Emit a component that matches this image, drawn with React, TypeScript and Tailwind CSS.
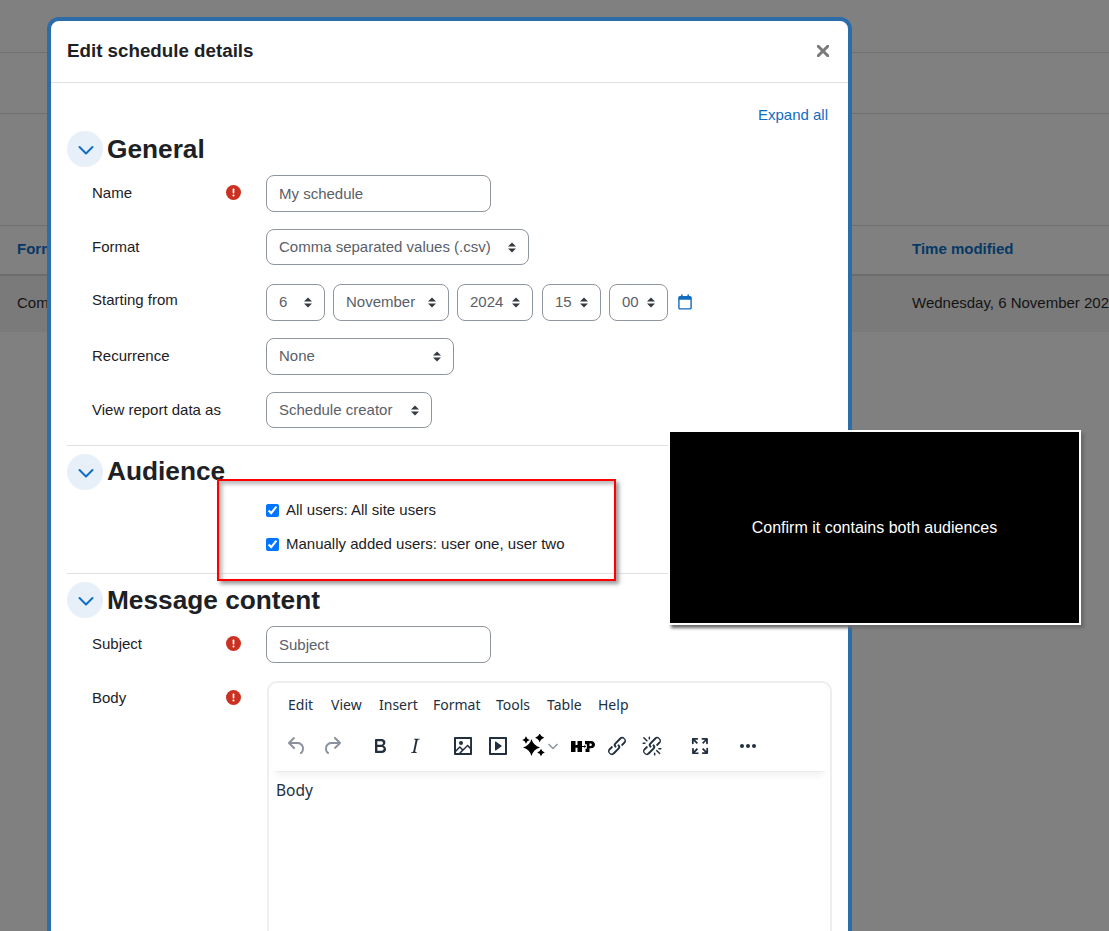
import React from "react";

const SANS = "font-['Liberation_Sans',Arial,sans-serif]";

function Arrows() {
  return (
    <svg width="10" height="11" viewBox="0 0 10 11" className="shrink-0" aria-hidden="true">
      <path d="M1 4.4 5 .6l4 3.8Z M1 6.6l4 3.8 4-3.8Z" fill="#343a40" />
    </svg>
  );
}

function Select({ w, h = "h-[37px]", label }: { w: string; h?: string; label: string }) {
  return (
    <div className={`${w} ${h} pr-[11px] flex items-center justify-between rounded-lg border border-[#8f959e] bg-white pl-[12px] text-[15px] text-[#5a6068]`}>
      <span>{label}</span>
      <Arrows />
    </div>
  );
}

function ErrorIcon() {
  return (
    <svg width="15" height="15" viewBox="0 0 16 16" className="mt-[3px] shrink-0" aria-hidden="true">
      <circle cx="8" cy="8" r="8" fill="#ca3120" />
      <rect x="7.1" y="3.7" width="1.8" height="5.3" rx=".7" fill="#fff" />
      <circle cx="8" cy="11.1" r="1.1" fill="#fff" />
    </svg>
  );
}

function Label({ text, pt = "pt-[7px]", error }: { text: string; pt?: string; error?: boolean }) {
  return (
    <div className={`w-[199px] shrink-0 flex items-start justify-between pl-[25px] pr-[25px] ${pt} text-[15px] leading-[22.5px]`}>
      <span>{text}</span>
      {error && <ErrorIcon />}
    </div>
  );
}

function Section({ title, up }: { title: string; up?: boolean }) {
  return (
    <div className="flex items-center h-[36px] mb-[8px]">
      <div className="w-[36px] h-[36px] rounded-full bg-[#e7eff8] flex items-center justify-center mr-[4px]">
        <svg width="16" height="16" viewBox="0 0 16 16" fill="none" aria-hidden="true" className="mt-[2px] ml-[2px]">
          <path d="M1.500 5l6.500 6.500L14.500 5" stroke="#0f6cbf" strokeWidth="2" strokeLinecap="round" strokeLinejoin="round" />
        </svg>
      </div>
      <h3 className={`text-[26.25px] font-bold leading-[36px] text-[#1d2125] ${up ? "pb-[2px]" : ""}`}>{title}</h3>
    </div>
  );
}

function TIcon({ d, color = "#222f3e", className = "w-[35px]" }: { d: string; color?: string; className?: string }) {
  return (
    <div className={`${className} h-[34px] flex items-center justify-center shrink-0`}>
      <svg width="24" height="24" viewBox="0 0 24 24" fill={color} fillRule="evenodd" aria-hidden="true">
        <path d={d} />
      </svg>
    </div>
  );
}

const ICONS = {
  undo: "M6.4 8H12c3.7 0 6.2 2 6.8 5.1.6 2.7-.4 5.6-2.3 6.8a1 1 0 0 1-1-1.8c1.1-.6 1.8-2.7 1.4-4.6-.5-2.1-2.1-3.5-4.9-3.5H6.4l3.3 3.3a1 1 0 1 1-1.4 1.4l-5-5a1 1 0 0 1 0-1.4l5-5a1 1 0 0 1 1.4 1.4L6.4 8Z",
  redo: "M17.6 10H12c-2.8 0-4.4 1.4-4.9 3.5-.4 2 .3 4 1.4 4.6a1 1 0 1 1-1 1.8c-2-1.2-2.9-4.1-2.3-6.8.6-3 3-5.1 6.8-5.1h5.6l-3.3-3.3a1 1 0 1 1 1.4-1.4l5 5a1 1 0 0 1 0 1.4l-5 5a1 1 0 0 1-1.4-1.4l3.3-3.3Z",
  bold: "M7.8 19c-.3 0-.5 0-.6-.2l-.2-.5V5.7c0-.2 0-.4.2-.5l.6-.2h5c1.5 0 2.7.3 3.5 1 .7.6 1.1 1.4 1.1 2.5a3 3 0 0 1-.6 1.9c-.4.6-1 1-1.6 1.2.4.1.9.3 1.3.6s.8.7 1 1.2c.4.4.5 1 .5 1.6 0 1.3-.4 2.3-1.3 3-.8.7-2.1 1-3.8 1H7.8Zm5-8.3c.6 0 1.2-.1 1.6-.5.4-.3.6-.7.6-1.3 0-1.1-.8-1.7-2.3-1.7H9.3v3.5h3.4Zm.5 6c.7 0 1.3-.1 1.7-.4.4-.4.6-.9.6-1.5s-.2-1-.7-1.4c-.4-.3-1-.4-2-.4H9.4v3.8h4Z",
  italic: "M16.7 4.7l-.1.9h-.3c-.6 0-1 0-1.4.3-.3.3-.4.6-.5 1.1l-2.1 9.8v.6c0 .5.4.8 1.4.8h.2l-.2.8H8l.2-.8h.2c1.1 0 1.8-.5 2-1.5l2-9.8.1-.5c0-.6-.4-.8-1.4-.8h-.3l.2-.9h5.8Z",
  image: "M5 15.7l3.3-3.2c.3-.3.7-.3 1 0L12 15l4.1-4c.3-.4.8-.4 1 0l2 1.9V5H5v10.7ZM5 18V19h3l2.8-2.9-2-2L5 17.9Zm14-3l-2.5-2.4-6.4 6.5H19v-4ZM4 3h16c.6 0 1 .4 1 1v16c0 .6-.4 1-1 1H4a1 1 0 0 1-1-1V4c0-.6.4-1 1-1Zm6 8a2 2 0 1 0 0-4 2 2 0 0 0 0 4Z",
  media: "M4 3h16c.6 0 1 .4 1 1v16c0 .6-.4 1-1 1H4a1 1 0 0 1-1-1V4c0-.6.4-1 1-1Zm1 2v14h14V5H5Zm4.8 2.6l5.6 4a.5.5 0 0 1 0 .8l-5.6 4A.5.5 0 0 1 9 16V8a.5.5 0 0 1 .8-.4Z",
  link: "M6.2 12.3a1 1 0 0 1 1.4 1.4l-2 2a2 2 0 1 0 2.6 2.8l4.8-4.8a1 1 0 0 0 0-1.4 1 1 0 1 1 1.4-1.3 2.9 2.9 0 0 1 0 4L9.6 20a3.9 3.9 0 0 1-5.5-5.5l2-2Zm11.6-.6a1 1 0 0 1-1.4-1.4l2-2a2 2 0 1 0-2.6-2.8L11 10.3a1 1 0 0 0 0 1.4A1 1 0 1 1 9.6 13a2.9 2.9 0 0 1 0-4L14.4 4a3.9 3.9 0 0 1 5.5 5.5l-2 2Z",
  unlink: "M6.2 12.3a1 1 0 0 1 1.4 1.4l-2.1 2a2 2 0 1 0 2.7 2.8l4.8-4.8a1 1 0 0 0 0-1.4 1 1 0 1 1 1.4-1.3 2.9 2.9 0 0 1 0 4L9.6 20a3.9 3.9 0 0 1-5.5-5.5l2-2Zm11.6-.6a1 1 0 0 1-1.4-1.4l2.1-2a2 2 0 1 0-2.7-2.8L11 10.3a1 1 0 0 0 0 1.4A1 1 0 1 1 9.6 13a2.9 2.9 0 0 1 0-4L14.4 4a3.9 3.9 0 0 1 5.5 5.5l-2 2ZM7.6 6.3a.8.8 0 0 1-1 1.1L3.3 4.2a.7.7 0 1 1 1-1l3.2 3.1ZM5.1 8.6a.8.8 0 0 1 0 1.5H3a.8.8 0 0 1 0-1.5H5Zm5-3.5a.8.8 0 0 1-1.5 0V3a.8.8 0 0 1 1.5 0v2Zm6 11.8a.8.8 0 0 1 1-1l3.2 3.2a.8.8 0 0 1-1 1L16 17Zm-2.2 2a.8.8 0 0 1 1.5 0V21a.8.8 0 0 1-1.5 0V19Zm5-3.5a.7.7 0 1 1 0-1.5H21a.8.8 0 0 1 0 1.5h-2Z",
  full: "M15.3 10l-1.2-1.3 2.9-3h-2.3a.9.9 0 1 1 0-1.7H19c.5 0 .9.4.9.9v4.4a.9.9 0 1 1-1.8 0V7l-2.9 3Zm0 4l3 3v-2.3c0-.5.4-.9 1-.9.4 0 .8.4.8.9v4.4c0 .5-.4.9-.9.9h-4.4a.9.9 0 1 1 0-1.8H17l-3-2.9 1.3-1.3ZM10 15.4l-2.9 3h2.3a.9.9 0 1 1 0 1.7H5a.9.9 0 0 1-.9-.9v-4.4a.9.9 0 1 1 1.8 0V17l2.9-3 1.2 1.3ZM8.7 10L5.7 7v2.3c0 .5-.4.9-1 .9a.9.9 0 0 1-.8-.9V4.9c0-.5.4-.9.9-.9h4.4a.9.9 0 1 1 0 1.8H7l3 2.9L8.7 10Z",
  more: "M6 10a2 2 0 0 0-2 2c0 1.1.9 2 2 2a2 2 0 0 0 2-2 2 2 0 0 0-2-2Zm12 0a2 2 0 0 0-2 2c0 1.1.9 2 2 2a2 2 0 0 0 2-2 2 2 0 0 0-2-2Zm-6 0a2 2 0 0 0-2 2c0 1.1.9 2 2 2a2 2 0 0 0 2-2 2 2 0 0 0-2-2Z",
};

function star(cx: number, cy: number, r: number) {
  const k = r * 0.22;
  return `M${cx} ${cy - r}Q${cx + k} ${cy - k} ${cx + r} ${cy}Q${cx + k} ${cy + k} ${cx} ${cy + r}Q${cx - k} ${cy + k} ${cx - r} ${cy}Q${cx - k} ${cy - k} ${cx} ${cy - r}Z`;
}

function Sparkles() {
  return (
    <svg width="24" height="24" viewBox="0 0 24 24" fill="#000" aria-hidden="true">
      <path d={star(10.5, 13.5, 8.5)} />
      <path d={star(18.7, 3.8, 4.6)} />
      <path d={star(20, 18.5, 3.8)} />
      <path d={star(5, 6, 3.8)} />
    </svg>
  );
}

function H5P() {
  return (
    <svg width="24" height="11" viewBox="0 0 24 11" fill="#000" className="ml-[2px]" aria-hidden="true">
      <path d="M0 0h4.500v4h2V0H11v11H6.500V6.700h-2V11H0Z" />
      <path d="M14 0h6c2.400 0 4 1.500 4 3.600S22.400 7.300 20 7.300h-1.500V11H14.500V7.700h1.300V3.300H14Zm4.500 2.400v2.500h1c.8 0 1.300-.5 1.300-1.250S20.300 2.400 19.500 2.400Z" />
      <path d="M11 4.800h2.300V3.500L16 5.500l-2.700 2V6.200H11Z" fill="#fff" />
      <path d="M11 5h2.300V4L15.200 5.500l-1.900 1.500V6H11Z" />
    </svg>
  );
}

const MENU: [string, string][] = [
  ["Edit", "w-[43px]"],
  ["View", "w-[48px]"],
  ["Insert", "w-[54px]"],
  ["Format", "w-[63px]"],
  ["Tools", "w-[51px]"],
  ["Table", "w-[51px]"],
  ["Help", "w-[40px]"],
];

export default function App() {
  return (
    <div className={`relative h-[931px] w-full overflow-hidden bg-[#808080] text-[#1d2125] ${SANS}`}>
      {/* dimmed page behind the dialog */}
      <div className="whitespace-nowrap text-[15px]">
        <div className="h-[53px] border-b border-[#707070]" />
        <div className="h-[61px] border-b border-[#707070]" />
        <div className="h-[112px] border-b border-[#707070]" />
        <div className="h-[50px] border-b-2 border-[#6c6c6c] flex items-center font-bold text-[#063866]">
          <span className="w-[912px] shrink-0 pl-[17px] pb-[2px]">Format</span>
          <span className="pb-[2px]">Time modified</span>
        </div>
        <div className="h-[56px] bg-[#7a7a7a] flex items-center pb-[2px] text-[#141414]">
          <span className="w-[912px] shrink-0 pl-[17px]">Comma separated values (.csv)</span>
          <span>Wednesday, 6 November 2024</span>
        </div>
      </div>

      {/* dialog */}
      <div className="absolute left-[47px] top-[17px] w-[805px] h-[1000px] rounded-[12px] border-4 border-[#2b6ca9] bg-white">
        <div className="h-[62px] border-b border-[#dee2e6] flex items-center justify-between pl-[16px] pr-[19px]">
          <h5 className="text-[18.75px] font-bold text-[#1d2125]">Edit schedule details</h5>
          <svg width="12" height="12" viewBox="0 0 12 12" aria-hidden="true" className="-mt-[2px]">
            <path d="M1.200 1.200l9.600 9.600M10.800 1.200l-9.600 9.600" stroke="#7a7a7a" strokeWidth="3" strokeLinecap="round" />
          </svg>
        </div>

        <div className="pt-[21px] px-[16px]">
          <div className="h-[23px] mb-[4px] pr-[4px] text-right text-[15px] leading-[22.5px] text-[#0f6cbf]">Expand all</div>

          <Section title="General" />
          <div className="flex h-[37px] mb-[17px]">
            <Label text="Name" error />
            <div className="w-[225px] h-[37px] rounded-lg border border-[#8f959e] pl-[12px] pt-[1px] flex items-center text-[15px] text-[#5a6068]">My schedule</div>
          </div>
          <div className="flex h-[36px] mb-[19px]">
            <Label text="Format" />
            <Select w="w-[263px]" h="h-[36px]" label="Comma separated values (.csv)" />
          </div>
          <div className="flex h-[37px] mb-[17px]">
            <Label text="Starting from" pt="pt-[5px]" />
            <div className="flex items-center">
              <Select w="w-[59px]" label="6" />
              <div className="w-[8px]" />
              <Select w="w-[116px]" label="November" />
              <div className="w-[8px]" />
              <Select w="w-[76px]" label="2024" />
              <div className="w-[9px]" />
              <Select w="w-[59px]" label="15" />
              <div className="w-[8px]" />
              <Select w="w-[59px]" label="00" />
              <svg width="14" height="16" viewBox="0 0 14 16" className="ml-[10px] -mt-[2px]" aria-hidden="true">
                <path d="M3 .5h1.600V2h4.800V.5H11V2h1c1 0 1.800.8 1.800 1.800v10c0 1-.8 1.800-1.800 1.800H2c-1 0-1.800-.8-1.800-1.800v-10C.2 2.800 1 2 2 2h1Zm-1.400 5.200v8c0 .3.2.5.5.5h9.800c.3 0 .5-.2.5-.5v-8Z" fill="#0f6cbf" fillRule="evenodd" />
              </svg>
            </div>
          </div>
          <div className="flex h-[37px] mb-[17px]">
            <Label text="Recurrence" />
            <Select w="w-[188px]" label="None" />
          </div>
          <div className="flex h-[36px] mb-[17px]">
            <Label text="View report data as" />
            <Select w="w-[166px]" h="h-[36px]" label="Schedule creator" />
          </div>

          <div className="border-t border-[#dee2e6] pt-[8px]">
            <Section title="Audience" up />
            <div className="h-[75px] pl-[199px] pt-[1px] flex flex-col gap-[11px] text-[15px]">
              <label className="flex items-center gap-[7px] h-[23px]">
                <input type="checkbox" defaultChecked className="w-[13px] h-[13px] m-0" />
                <span>All users: All site users</span>
              </label>
              <label className="flex items-center gap-[7px] h-[23px]">
                <input type="checkbox" defaultChecked className="w-[13px] h-[13px] m-0" />
                <span>Manually added users: user one, user two</span>
              </label>
            </div>
          </div>

          <div className="border-t border-[#dee2e6] pt-[8px]">
            <Section title="Message content" />
            <div className="flex h-[37px] mb-[18px]">
              <Label text="Subject" error />
              <div className="w-[225px] h-[37px] rounded-lg border border-[#8f959e] pl-[12px] pt-[1px] flex items-center text-[15px] text-[#5a6068]">Subject</div>
            </div>
            <div className="flex">
              <Label text="Body" pt="pt-[6px]" error />
              <div className="ml-[1px] w-[565px] h-[400px] rounded-[10px] border-2 border-[#eeeeee] font-['Noto_Sans','Open_Sans',sans-serif]">
                <div className="h-[88px] shadow-[0_2px_2px_-2px_rgba(34,47,62,0.1),0_8px_8px_-4px_rgba(34,47,62,0.07)] mx-[3px]">
                  <div className="flex pl-[16px] pt-[12px] h-[42px] text-[14px] leading-[20px] text-[#222f3e]">
                    {MENU.map(([m, w]) => (
                      <span key={m} className={w}>{m}</span>
                    ))}
                  </div>
                  <div className="flex items-center h-[34px] pl-[7.500px] mt-[4px]">
                    <TIcon d={ICONS.undo} color="#8b929b" />
                    <TIcon d={ICONS.redo} color="#8b929b" />
                    <div className="w-[13px]" />
                    <TIcon d={ICONS.bold} />
                    <TIcon d={ICONS.italic} />
                    <div className="w-[13px]" />
                    <TIcon d={ICONS.image} />
                    <TIcon d={ICONS.media} />
                    <div className="w-[34px] h-[34px] flex items-center justify-center shrink-0"><Sparkles /></div>
                    <svg width="12" height="12" viewBox="0 0 12 12" fill="none" className="-ml-[3px] shrink-0" aria-hidden="true">
                      <path d="M1.500 4l4.500 4.500L10.500 4" stroke="#8b929b" strokeWidth="1.400" />
                    </svg>
                    <div className="w-[38px] h-[34px] flex items-center justify-center shrink-0 ml-[4px]"><H5P /></div>
                    <TIcon d={ICONS.link} className="w-[32px]" />
                    <TIcon d={ICONS.unlink} className="w-[38px]" />
                    <div className="w-[12px]" />
                    <TIcon d={ICONS.full} />
                    <div className="w-[13px]" />
                    <TIcon d={ICONS.more} />
                  </div>
                </div>
                <div className="pl-[7px] pt-[8px] text-[15.500px] leading-[22px] text-[#222f3e]">Body</div>
              </div>
            </div>
          </div>
        </div>
      </div>

      {/* red highlight over the audience list */}
      <div className="absolute left-[217px] top-[479px] w-[399px] h-[102px] border-2 border-[#ff0000] shadow-[3px_3px_4px_#9a9a9a,inset_3px_3px_4px_#b5b5b5]" />

      {/* annotation */}
      <div className="absolute left-[668px] top-[430px] w-[413px] h-[195px] border-2 border-white bg-black flex items-center justify-center text-[16px] text-white shadow-[3px_3px_3px_#6a6a6a]">
        Confirm it contains both audiences
      </div>
    </div>
  );
}
